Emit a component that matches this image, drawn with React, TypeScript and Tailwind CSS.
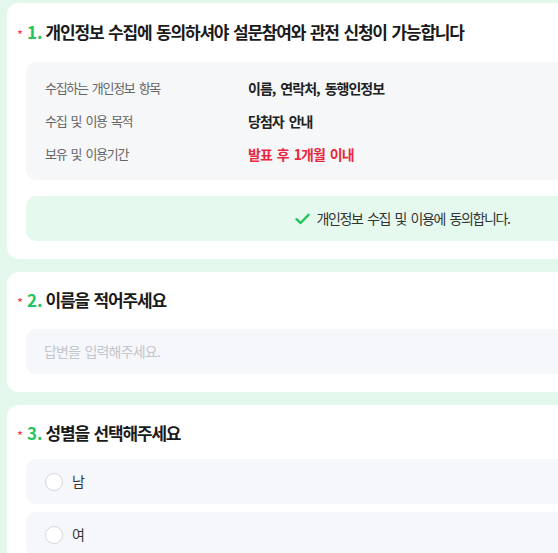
import React from "react";

const font = { fontFamily: '"Noto Sans CJK KR", "Noto Sans", sans-serif' };

function Title({ n, text }: { n: string; text: string }) {
  return (
    <div className="flex items-baseline h-[24px] leading-[24px] overflow-hidden">
      <span className="text-[#ef3b4f] text-[13px] w-[10px] self-center leading-[13px] pt-[5px]">*</span>
      <span className="text-[#22c55e] text-[17px] font-bold mr-[3px]">{n}.</span>
      <span className="text-[#1a1a1a] text-[17px] font-bold tracking-[-0.07em] [word-spacing:2px]">{text}</span>
    </div>
  );
}

function Radio({ label }: { label: string }) {
  return (
    <div className="h-[45px] rounded-[10px] bg-[#f6f7fa] flex items-center pl-[19px] gap-[9px]">
      <span className="w-[18px] h-[18px] rounded-full border border-[#d4d7dc] bg-white" />
      <span className="text-[14px] text-[#333]">{label}</span>
    </div>
  );
}

const labelCls = "w-[203px] text-[#666] text-[13px] leading-[20px] tracking-[-0.1em] [word-spacing:0.2em]";
const valueCls = "font-semibold text-[14px] leading-[20px] tracking-[-0.07em] [word-spacing:0.2em]";

export default function App() {
  return (
    <div className="w-[558px] h-[553px] overflow-hidden bg-[#e4f7ed]" style={font}>
      <div className="w-[790px] ml-[7px] pt-[3px] flex flex-col gap-[13px]">
        {/* Card 1 */}
        <div className="bg-white rounded-[12px] pl-[10px] pr-[19px] pt-[17px] pb-[18px]">
          <Title n="1" text="개인정보 수집에 동의하셔야 설문참여와 관전 신청이 가능합니다" />
          <div className="ml-[9px] mt-[18px] bg-[#f6f7f9] rounded-[10px] pt-[16px] pb-[16px] pl-[19px] flex flex-col gap-[13px]">
            <div className="flex items-center h-[20px]">
              <span className={labelCls}>수집하는 개인정보 항목</span>
              <span className={`${valueCls} text-[#222]`}>이름, 연락처, 동행인정보</span>
            </div>
            <div className="flex items-center h-[20px]">
              <span className={labelCls}>수집 및 이용 목적</span>
              <span className={`${valueCls} text-[#222]`}>당첨자 안내</span>
            </div>
            <div className="flex items-center h-[20px]">
              <span className={labelCls}>보유 및 이용기간</span>
              <span className={`${valueCls} text-[#e8283f]`}>발표 후 1개월 이내</span>
            </div>
          </div>
          <div className="ml-[9px] mt-[16px] h-[45px] rounded-[10px] bg-[#e6f9ee] flex items-center justify-center gap-[7px]">
            <svg width="15" height="12" viewBox="0 0 15 12" fill="none">
              <path d="M1.5 6.2 L5.6 10 L13.5 1.8" stroke="#22c55e" strokeWidth="2.4" strokeLinecap="round" strokeLinejoin="round" />
            </svg>
            <span className="text-[14px] text-[#333] tracking-[-0.1em] [word-spacing:0.2em]">개인정보 수집 및 이용에 동의합니다.</span>
          </div>
        </div>

        {/* Card 2 */}
        <div className="bg-white rounded-[12px] pl-[10px] pr-[19px] pt-[16px] pb-[18px]">
          <Title n="2" text="이름을 적어주세요" />
          <div className="ml-[9px] mt-[17px] h-[45px] rounded-[10px] bg-[#f6f7fa] flex items-center pl-[18px]">
            <span className="text-[14px] text-[#c3c6cc] tracking-[-0.06em] [word-spacing:0.15em]">답변을 입력해주세요.</span>
          </div>
        </div>

        {/* Card 3 */}
        <div className="bg-white rounded-[12px] pl-[10px] pr-[19px] pt-[16px] pb-[19px]">
          <Title n="3" text="성별을 선택해주세요" />
          <div className="ml-[9px] mt-[14px] flex flex-col gap-[8px]">
            <Radio label="남" />
            <Radio label="여" />
          </div>
        </div>
      </div>
    </div>
  );
}
